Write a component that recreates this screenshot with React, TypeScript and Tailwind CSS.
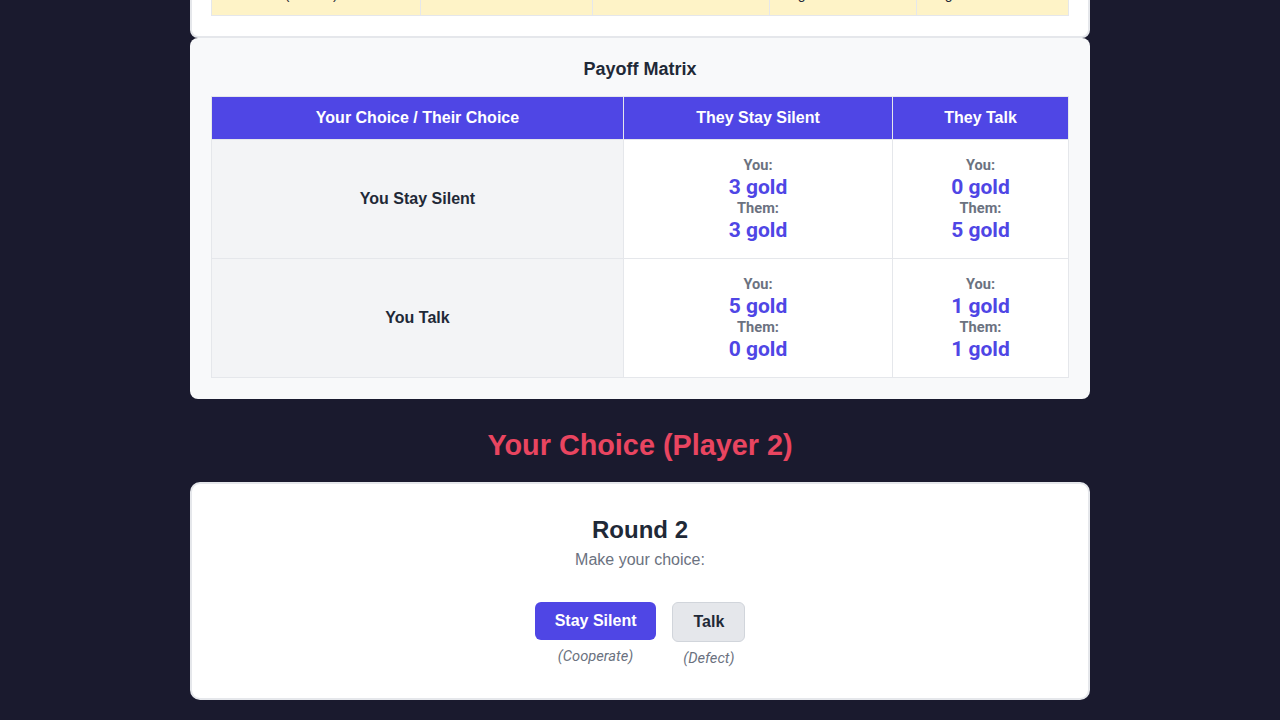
const sans = "font-['Liberation_Sans',Arial,sans-serif]";
const roboto = "font-['Roboto','Liberation_Sans',sans-serif]";

type Payoff = { you: number; them: number };

const matrix: { label: string; cells: Payoff[] }[] = [
  { label: "You Stay Silent", cells: [{ you: 3, them: 3 }, { you: 0, them: 5 }] },
  { label: "You Talk", cells: [{ you: 5, them: 0 }, { you: 1, them: 1 }] },
];

function PayoffCell({ you, them }: Payoff) {
  return (
    <td className="border border-[#e5e7eb] bg-white px-4 py-3 text-center align-middle">
      <div className={`${roboto} flex flex-col items-center`}>
        <span className="text-[14.6px] leading-[18px] font-bold text-[#6b7280]">You:</span>
        <span className="mt-[2px] text-[21px] leading-[23px] font-bold text-[#4f46e5]">{you} gold</span>
        <span className="text-[14.6px] leading-[18px] font-bold text-[#6b7280]">Them:</span>
        <span className="mt-[2px] text-[21px] leading-[23px] font-bold text-[#4f46e5]">{them} gold</span>
      </div>
    </td>
  );
}

function HistoryCard() {
  // only the bottom edge of this card is on screen
  return (
    <div className="-mt-[83px] rounded-[8px] border-2 border-[#e5e7eb] bg-white px-[19px] pt-5 pb-5">
      <table className={`${sans} w-full table-fixed border-collapse text-[14px] leading-[20px] text-[#1f2937]`}>
        <colgroup>
          <col className="w-[209px]" />
          <col className="w-[172px]" />
          <col className="w-[177px]" />
          <col className="w-[147px]" />
          <col />
        </colgroup>
        <tbody>
          <tr className="bg-[#fef3c7]">
            <td className="h-[76px] border border-[#e5e7eb] px-4 pt-[44px] align-top">Round 1 (current)</td>
            <td className="border border-[#e5e7eb] px-4"></td>
            <td className="border border-[#e5e7eb] px-4"></td>
            <td className="border border-[#e5e7eb] px-4 pt-[44px] align-top">3 gold</td>
            <td className="border border-[#e5e7eb] px-4 pt-[44px] align-top">3 gold</td>
          </tr>
        </tbody>
      </table>
    </div>
  );
}

export default function App() {
  return (
    <div className={`${sans} min-h-screen overflow-hidden bg-[#1a1a2e]`}>
      <div className="mx-auto w-[900px]">
        <HistoryCard />

        <div className="rounded-[8px] bg-[#f8f9fa] px-[21px] pt-[19px] pb-[21px]">
          <h3 className="text-center text-[18px] leading-[24px] font-bold text-[#1f2937]">Payoff Matrix</h3>
          <table className="mt-[15px] w-full table-fixed border-collapse border border-[#e5e7eb]">
            <colgroup>
              <col className="w-[412px]" />
              <col className="w-[269px]" />
              <col />
            </colgroup>
            <thead>
              <tr className="bg-[#4f46e5] text-[16px] font-bold text-white">
                <th className="h-[43px] border border-[#e5e7eb] px-3">Your Choice / Their Choice</th>
                <th className="border border-[#e5e7eb] px-3">They Stay Silent</th>
                <th className="border border-[#e5e7eb] px-3">They Talk</th>
              </tr>
            </thead>
            <tbody>
              {matrix.map((row) => (
                <tr key={row.label}>
                  <td className="h-[119px] border border-[#e5e7eb] bg-[#f3f4f6] text-center text-[16px] font-bold text-[#1f2937]">
                    {row.label}
                  </td>
                  {row.cells.map((c, i) => (
                    <PayoffCell key={i} {...c} />
                  ))}
                </tr>
              ))}
            </tbody>
          </table>
        </div>

        <h2 className="mt-[28px] mb-[20px] text-center text-[28.8px] leading-[36px] font-bold text-[#e94560]">
          Your Choice (Player 2)
        </h2>

        <div className="-mt-px rounded-[10px] border-2 border-[#e5e7eb] bg-white pt-[30px] pb-[30px] text-center">
          <h3 className="text-[24px] leading-[32px] font-bold text-[#1f2937]">Round 2</h3>
          <p className="mt-[2px] text-[16px] leading-[24px] text-[#6b7280]">Make your choice:</p>
          <div className="mt-[30px] flex items-start justify-center gap-4">
            <div className="flex flex-col items-center">
              <button className="rounded-[6px] bg-[#4f46e5] px-5 py-[7px] text-[16px] leading-[24px] font-bold text-white">
                Stay Silent
              </button>
              <span className={`${roboto} mt-[6px] text-[14.7px] leading-[20px] text-[#6b7280] italic`}>(Cooperate)</span>
            </div>
            <div className="flex flex-col items-center">
              <button className="rounded-[6px] border border-[#d1d5db] bg-[#e5e7eb] px-5 py-[7px] text-[16px] leading-[24px] font-bold text-[#1f2937]">
                Talk
              </button>
              <span className={`${roboto} mt-[6px] text-[14.7px] leading-[20px] text-[#6b7280] italic`}>(Defect)</span>
            </div>
          </div>
        </div>
      </div>
    </div>
  );
}
